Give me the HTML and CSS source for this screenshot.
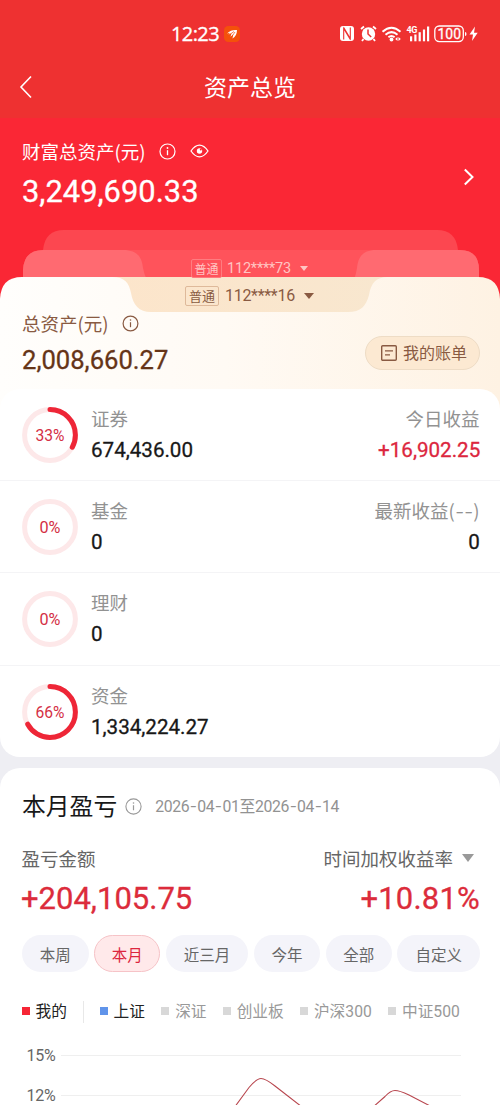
FILE: index.html
```html
<!DOCTYPE html>
<html lang="zh-CN">
<head>
<meta charset="utf-8">
<title>资产总览</title>
<link rel="stylesheet" href="styles.css">
</head>
<body>
<header class="top">
  <div class="status">
    <span class="clock">12:23</span>
    <svg class="app-dot" width="16" height="16" viewBox="0 0 16 16"><rect width="16" height="16" rx="4.500" fill="#f4510b"/><path d="M3 7.500C6 4.500 9 3.600 13 4c0 4-1.500 6.500-4.500 8.500l.8-4.200-2.800 2.500 1-3.500-3 1.500 1.500-2z" fill="#fff"/><path d="M5 9l5-3.500M7.500 11L11 6" stroke="#f4510b" stroke-width=".7"/></svg>
    <svg class="indicators" width="142" height="20" viewBox="0 0 142 20">
      <rect x="1" y="2" width="14" height="15" rx="3" fill="#fff"/>
      <path d="M4.700 15.500V4.500l6.600 11M4.700 3.500l6.600 11V3.500" fill="none" stroke="#ee3131" stroke-width="1.100"/>
      <g fill="none" stroke="#fff">
        <path d="M22 5l3-2.500M37 5l-3-2.500M24.500 15l-1.500 2M34.500 15l1.500 2" stroke-width="1.800"/>
        <path d="M43.500 7.700q9-8 18 0M46.500 10.700q6-5.200 12 0M49.400 13.300q3.100-2.500 6.200 0" stroke-width="2"/>
      </g>
      <circle cx="29.500" cy="10" r="6.700" fill="#fff"/>
      <path d="M29 5.500V10l3.200 3" fill="none" stroke="#ee3131" stroke-width="1.500"/>
      <circle cx="52.500" cy="15.500" r="1.900" fill="#fff"/>
      <path d="M58.500 13l-2.300 2 2.300 2zM59.500 13l2.300 2-2.300 2z" fill="#fff"/>
      <text class="net" x="67.500" y="8.700">4G</text>
      <g fill="#fff"><rect x="71" y="12.300" width="2.200" height="5"/><rect x="75.300" y="10.500" width="2.200" height="6.800"/><rect x="79.600" y="8.200" width="2.200" height="9.100"/><rect x="83.900" y="5.500" width="2.200" height="11.800"/><rect x="88" y="2.500" width="2.200" height="14.800"/></g>
      <rect x="95.800" y="2" width="28.500" height="15.600" rx="4.500" fill="none" stroke="#fff" stroke-width="1.300"/>
      <text class="batt" x="98.500" y="15.200" textLength="23.500" lengthAdjust="spacingAndGlyphs">100</text>
      <path d="M126 8q1.500.2 1.500 2T126 12z" fill="#fff"/>
      <path d="M136 2.500l-5.500 8h3.500l-1 6.500 5.700-8.200h-3.700z" fill="#fff"/>
    </svg>
  </div>
  <div class="nav">
    <svg class="back" width="14" height="24" viewBox="0 0 14 24"><path d="M12 1.500L2 12l10 10.500" fill="none" stroke="#fff" stroke-width="1.600"/></svg>
    <h1 class="title">资产总览</h1>
  </div>
</header>

<section class="wealth">
  <div class="wealth-label">财富总资产(元)
    <svg class="wealth-info" width="17" height="17" viewBox="0 0 17 17"><circle cx="8.500" cy="8.500" r="7.500" fill="none" stroke="#fff" stroke-width="1.200"/><path d="M8.500 7.200v5" stroke="#fff" stroke-width="1.300"/><circle cx="8.500" cy="5" r=".9" fill="#fff"/></svg>
    <svg class="eye" width="19" height="14" viewBox="0 0 19 14"><path d="M1 7Q5 1.200 9.500 1.200T18 7Q14 12.800 9.500 12.800T1 7z" fill="none" stroke="#fff" stroke-width="1.300"/><circle cx="9.500" cy="7" r="2.700" fill="#fff"/><circle cx="10.800" cy="5.500" r="1" fill="#fa2735"/></svg>
  </div>
  <div class="wealth-value"><span class="num">3,249,690.33</span></div>
  <svg class="go" width="12" height="18" viewBox="0 0 12 18"><path d="M1.800 1.500L9.500 9l-7.700 7.500" fill="none" stroke="#fff" stroke-width="2"/></svg>
</section>

<main class="body">
  <section class="account">
    <svg class="folders" width="500" height="180" viewBox="0 0 500 180">
      <defs>
        <linearGradient id="ivory" x1="0" x2="1"><stop offset="0" stop-color="#fffefc"/><stop offset=".45" stop-color="#fffaf4"/><stop offset="1" stop-color="#fef2e3"/></linearGradient>
        <linearGradient id="notch" x1="0" x2="1"><stop offset="0" stop-color="#fce5cb"/><stop offset="1" stop-color="#f8e7cf"/></linearGradient>
      </defs>
      <rect width="500" height="80" fill="#fa2735"/>
      <path d="M43 50V20Q45 0 64 0H437Q456 0 458 20V50z" fill="#fc4750"/>
      <path d="M23 70V40Q24 20 43 20H460Q479 20 479 40V70z" fill="#ff535b"/>
      <path d="M23 60V40Q24 20 43 20H123C138 20 142 28 143 38Q144 44 147 50H23zM479 60V40Q479 20 460 20H376C362 20 358 28 357 38Q356 44 354 50H479z" fill="#ff6a71"/>
      <path d="M0 180V69Q1 47 22 47H478Q499 47 500 69V180z" fill="url(#ivory)"/>
      <path d="M112 47C125 47 129 53 131 63C133 75 139 82 151 82H348C361 82 366 76 369 65C371 53 376 47 388 47z" fill="url(#notch)"/>
    </svg>
    <div class="tab tab-back"><span class="tag">普通</span><span class="acct">112****73</span><i class="tri"></i></div>
    <div class="tab tab-front"><span class="tag">普通</span><span class="acct">112****16</span><i class="tri"></i></div>
    <div class="total">
      <div class="total-main">
        <div class="total-label">总资产(元)
          <svg class="total-info" width="17" height="17" viewBox="0 0 17 17"><circle cx="8.500" cy="8.500" r="7.400" fill="none" stroke="#895a42" stroke-width="1.200"/><path d="M8.500 7.200v5" stroke="#895a42" stroke-width="1.200"/><circle cx="8.500" cy="5" r=".8" fill="#895a42"/></svg>
        </div>
        <div class="total-value"><span class="num">2,008,660.27</span></div>
      </div>
      <div class="bill">
        <svg width="18" height="18" viewBox="0 0 18 18"><rect x="1.700" y="1.700" width="14.600" height="14.600" rx="1" fill="none" stroke="#895a42" stroke-width="1.400"/><path d="M5 6.800h8M5 10.800h5" stroke="#895a42" stroke-width="1.300"/></svg>
        <span>我的账单</span>
      </div>
    </div>
  </section>

  <section class="assets">
    <div class="row">
      <svg class="ring" width="56" height="56" viewBox="0 0 56 56"><circle class="track" cx="28" cy="28" r="25.400"/><circle class="arc" cx="28" cy="28" r="25.400" pathLength="100" stroke-dasharray="33 100"/><text x="28" y="34" textLength="29" lengthAdjust="spacingAndGlyphs">33%</text></svg>
      <div class="cell"><div class="name">证券</div><div class="amt"><span class="num">674,436.00</span></div></div>
      <div class="cell right"><div class="name">今日收益</div><div class="amt up"><span class="num">+16,902.25</span></div></div>
    </div>
    <div class="row">
      <svg class="ring" width="56" height="56" viewBox="0 0 56 56"><circle class="track" cx="28" cy="28" r="25.400"/><text x="28" y="34" textLength="21" lengthAdjust="spacingAndGlyphs">0%</text></svg>
      <div class="cell"><div class="name">基金</div><div class="amt"><span class="num">0</span></div></div>
      <div class="cell right"><div class="name">最新收益(<span class="dashes"><b>-</b><b>-</b></span>)</div><div class="amt"><span class="num">0</span></div></div>
    </div>
    <div class="row">
      <svg class="ring" width="56" height="56" viewBox="0 0 56 56"><circle class="track" cx="28" cy="28" r="25.400"/><text x="28" y="34" textLength="21" lengthAdjust="spacingAndGlyphs">0%</text></svg>
      <div class="cell"><div class="name">理财</div><div class="amt"><span class="num">0</span></div></div>
    </div>
    <div class="row">
      <svg class="ring" width="56" height="56" viewBox="0 0 56 56"><circle class="track" cx="28" cy="28" r="25.400"/><circle class="arc" cx="28" cy="28" r="25.400" pathLength="100" stroke-dasharray="67 100"/><text x="28" y="34" textLength="29" lengthAdjust="spacingAndGlyphs">66%</text></svg>
      <div class="cell"><div class="name">资金</div><div class="amt"><span class="num">1,334,224.27</span></div></div>
    </div>
  </section>

  <section class="profit">
    <div class="profit-head">
      <h2>本月盈亏</h2>
      <svg width="17" height="17" viewBox="0 0 17 17"><circle cx="8.500" cy="8.500" r="7.600" fill="none" stroke="#999" stroke-width="1.100"/><path d="M8.500 7.200v5" stroke="#999" stroke-width="1.200"/><circle cx="8.500" cy="5" r=".8" fill="#999"/></svg>
      <span class="range">2026<b>-</b>04<b>-</b>01至2026<b>-</b>04<b>-</b>14</span>
    </div>
    <div class="profit-names"><span>盈亏金额</span><span class="rate">时间加权收益率<i class="tri"></i></span></div>
    <div class="profit-values"><span class="num gain">+204,105.75</span><span class="num pct">+10.81%</span></div>
    <div class="pills">
      <span>本周</span><span class="on">本月</span><span class="wide">近三月</span><span>今年</span><span>全部</span><span class="wide">自定义</span>
    </div>
    <div class="legend">
      <span class="k mine">我的</span><span class="bar"></span><span class="k sh">上证</span><span class="k">深证</span><span class="k">创业板</span><span class="k">沪深300</span><span class="k">中证500</span>
    </div>
    <svg class="chart" width="500" height="71" viewBox="0 0 500 71">
      <path d="M61 21.500H461M61 61.500H461" stroke="#efefef"/>
      <text x="26.500" y="27">15%</text><text x="26.500" y="66.500">12%</text>
      <path d="M234 74L249 53.500Q256.500 44.500 261 44.500T275 52L302 73M372 74L385 62.500Q390.500 56.500 395 56.500T409 61L434 74" fill="none" stroke="#b8474f" stroke-width="1.100"/>
    </svg>
  </section>
</main>
</body>
</html>
```
FILE: styles.css
```css
* { box-sizing: border-box; }
body {
  margin: 0;
  width: 500px;
  height: 1105px;
  overflow: hidden;
  background: #eeeef3;
  font-family: "Roboto", "Noto Sans CJK SC", sans-serif;
  color: #181818;
}
svg { display: block; flex: none; }
.num { display: inline-block; font-family: "Roboto", sans-serif; font-weight: 400; -webkit-text-stroke: .3px currentColor; transform-origin: left center; white-space: nowrap; }

.top { height: 118px; background: #ee3131; color: #fff; }
.status { display: flex; align-items: center; height: 67px; padding-left: 171px; }
.clock { width: 53px; font: 400 20px/24px "Open Sans", "Noto Sans", sans-serif; letter-spacing: -.6px; -webkit-text-stroke: .35px currentColor; }
.indicators { margin-left: 99px; }
.net { font: 700 9px "Roboto", sans-serif; fill: #fff; letter-spacing: -.4px; }
.batt { font: 400 15.500px "Roboto", sans-serif; fill: #fff; stroke: #fff; stroke-width: .3px; }
.nav { display: flex; align-items: center; height: 40px; padding: 0 19px; }
.title { margin: -2px auto 0; padding-right: 14px; font: 400 23px/34px "Noto Sans CJK SC", sans-serif; }

.wealth { display: grid; grid-template: 46px 66px / 1fr 12px; height: 112px; padding: 0 25px 0 22px; background: #fa2735; color: #fff; }
.wealth-label { display: flex; align-items: center; grid-area: 1 / 1; padding-top: 20px; font: 18.500px/26px "Noto Sans CJK SC", sans-serif; }
.wealth-info { margin: 1px 0 0 13px; }
.eye { margin: 0 0 0 14px; }
.wealth-value { grid-area: 2 / 1; padding-top: 8px; font-size: 32px; line-height: 38px; }
.wealth-value .num { transform: scaleX(.965); }
.go { grid-area: 2 / 2; margin-top: 4px; }

.body { background: #eeeef3; }
.account { position: relative; height: 159px; padding-top: 28px; }
.folders { position: absolute; left: 0; top: 0; }
.tab { position: relative; display: flex; align-items: center; }
.tag { border: 1px solid; border-radius: 2px; font-family: "Noto Sans CJK SC", sans-serif; text-align: center; }
.tri { width: 0; height: 0; border: 5px solid transparent; border-top: 6px solid; border-bottom: 0; }
.tab-back { height: 20px; padding-left: 191px; color: #ffc5c3; font-size: 14.500px; }
.tab-back .tag { width: 31px; font-size: 12px; line-height: 17px; border-color: #ff7c80; }
.tab-back .acct { width: 64px; margin-left: 5px; letter-spacing: -.2px; }
.tab-back .tri { margin-left: 9px; border-width: 5px 4px 0; }
.tab-front { height: 35px; padding-left: 185px; color: #895a42; font-size: 16px; }
.tab-front .tag { width: 34px; font-size: 13px; line-height: 18px; border-color: #deb99a; }
.tab-front .acct { width: 71px; margin-left: 6px; letter-spacing: -.3px; }
.tab-front .tri { margin-left: 8px; }
.total { position: relative; display: flex; justify-content: space-between; padding: 0 20px 0 22px; }
.total-label { display: flex; align-items: center; height: 22px; margin-top: -1px; font: 18.500px/22px "Noto Sans CJK SC", sans-serif; color: #895a42; }
.total-info { margin-left: 13px; }
.total-value { padding-top: 11px; font-size: 26px; line-height: 30px; color: #653417; }
.total-value .num { transform: scaleX(.985); }
.bill { display: flex; align-items: center; gap: 5px; width: 115px; height: 34px; margin-top: 23px; padding: 0 0 2px 14px; border: 1px solid #eedcc5; border-radius: 17px; background: #fce9d2; color: #895a42; font: 16px/24px "Noto Sans CJK SC", sans-serif; }
.bill svg { margin-top: 1px; }

.assets { position: relative; height: 368px; border-radius: 20px; background: #fff; }
.row { display: flex; align-items: center; height: 92.200px; padding: 0 20px 0 21.500px; border-bottom: 1px solid #f4f4f6; }
.row:last-child { border: 0; }
.ring circle { fill: none; stroke-width: 5px; }
.ring .track { stroke: #fde8e9; }
.ring .arc { stroke: #ee2637; stroke-linecap: round; transform: rotate(-90deg); transform-origin: 28px 28px; }
.ring text { font: 400 16.500px "Roboto", sans-serif; fill: #d43045; text-anchor: middle; }
.cell { flex: 1; margin-left: 13.500px; }
.right { text-align: right; }
.name { font: 18.500px/24px "Noto Sans CJK SC", sans-serif; color: #929292; }
.right .name { margin-right: .5px; }
.dashes b { display: inline-block; width: 9.300px; font-weight: 400; text-align: center; transform: scaleX(1.300); }
.amt { margin-top: 6px; font-size: 21px; line-height: 28px; }
.amt .num { transform: scaleX(.98); }
.right .num { transform-origin: right center; }
.up { color: #dc263e; }

.profit { height: 337px; margin-top: 11px; border-radius: 20px 20px 0 0; background: #fff; overflow: hidden; }
.profit-head { display: flex; align-items: center; height: 76px; padding: 0 22px; }
h2 { margin: -2px 8px 0 0; font: 400 23.800px/36px "Noto Sans CJK SC", sans-serif; }
.range { margin: 2px 0 0 13px; font: 15.800px/24px "Roboto", "Noto Sans CJK SC", sans-serif; color: #929292; letter-spacing: -.35px; }
.range b { display: inline-block; width: 8px; font-weight: 400; text-align: center; transform: scaleX(1.300); }
.profit-names { display: flex; justify-content: space-between; height: 28px; padding: 0 26px 0 21.500px; font: 18.500px/28px "Noto Sans CJK SC", sans-serif; color: #666; }
.rate { display: flex; align-items: center; }
.rate .tri { margin-left: 9px; border-width: 8px 6.500px 0; color: #999; }
.profit-values { display: flex; justify-content: space-between; height: 63px; padding: 6px 20px 0 21px; font-size: 31px; line-height: 42px; color: #dc2c3b; }
.pct { letter-spacing: .2px; }
.pills { display: flex; justify-content: space-between; padding: 0 20px 0 22px; }
.pills span { width: 66.500px; height: 37px; border-radius: 19px; background: #f4f4fa; font: 15.500px/38px "Noto Sans CJK SC", sans-serif; text-align: center; color: #666; }
.pills .wide { width: 82.500px; }
.pills .on { border: 1px solid #f6c3c7; background: #ffe9ea; color: #dc263e; line-height: 36px; }
.legend { display: flex; align-items: center; height: 64px; padding: 15px 0 0 21.500px; font: 15.700px/24px "Roboto", "Noto Sans CJK SC", sans-serif; color: #999; }
.k { display: flex; align-items: center; margin-right: 16.200px; white-space: nowrap; }
.k::before { content: ""; width: 8px; height: 8px; margin: -2px 6px 0 0; background: #d8d8d8; }
.k.mine { color: #222; }
.k.mine::before { background: #f62535; }
.k.sh { color: #222; }
.k.sh::before { background: #6094ea; }
.bar { width: 1px; height: 22px; margin-right: 15.500px; background: #e8e8e8; }
.chart { margin-top: -2px; }
.chart text { font: 16px "Roboto", sans-serif; fill: #666; letter-spacing: -.3px; }
```
